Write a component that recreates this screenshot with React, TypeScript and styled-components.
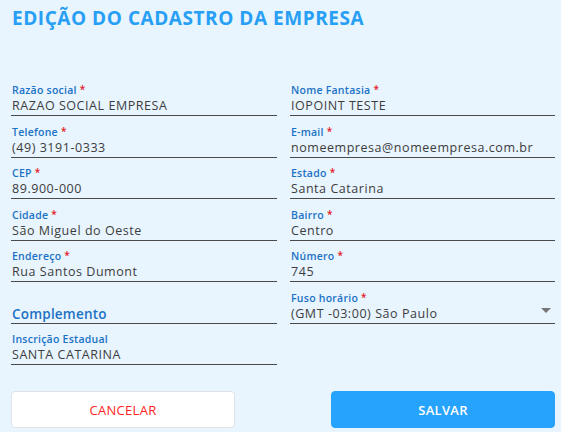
import React from "react";
import styled, { createGlobalStyle } from "styled-components";

const Global = createGlobalStyle`
  html, body { margin: 0; padding: 0; background: #e8f4fe; }
  body { font-family: "Open Sans", "Noto Sans", sans-serif; }
  * { box-sizing: border-box; }
`;

const Page = styled.div`
  width: 561px;
  height: 432px;
  padding: 5px 6px 0 11px;
  background: #e8f4fe;
  display: flex;
  flex-direction: column;
`;

const Title = styled.h1`
  margin: 0 0 0 1px;
  font-family: "Open Sans", sans-serif;
  font-weight: 700;
  font-size: 19px;
  line-height: 26px;
  color: #279ff5;
  letter-spacing: 0.55px;
`;

const Grid = styled.div`
  margin-top: 53px;
  display: grid;
  grid-template-columns: 266px 265px;
  column-gap: 13px;
  row-gap: 9.5px;
`;

const Field = styled.div`
  display: flex;
  flex-direction: column;
  border-bottom: 1px solid #4a4a4a;
  height: 32px;
  padding-left: 1px;
  position: relative;
`;

const Label = styled.div`
  font-size: 10.5px;
  line-height: 13px;
  font-weight: 600;
  color: #1b72c4;
  letter-spacing: 0.25px;
`;

const Star = styled.span`
  color: #e3141b;
  font-size: 10px;
  margin-left: 3px;
  position: relative;
  top: -1px;
`;

const Value = styled.div<{ $placeholder?: boolean }>`
  margin-top: auto;
  font-size: ${(p) => (p.$placeholder ? "13.5px" : "12.5px")};
  line-height: 18px;
  color: ${(p) => (p.$placeholder ? "#1b72c4" : "#3d3d3d")};
  font-weight: ${(p) => (p.$placeholder ? 600 : 400)};
  letter-spacing: ${(p) => (p.$placeholder ? "0.2px" : "0.55px")};
  white-space: nowrap;
`;

const Caret = styled.span`
  position: absolute;
  right: 4px;
  bottom: 10px;
  width: 0;
  height: 0;
  border-left: 5px solid transparent;
  border-right: 5px solid transparent;
  border-top: 5px solid #777;
`;

const Buttons = styled.div`
  margin-top: 26px;
  display: flex;
  justify-content: space-between;
`;

const Button = styled.button<{ $primary?: boolean }>`
  width: 224px;
  height: 37px;
  border-radius: 4px;
  font-family: "Open Sans", sans-serif;
  font-size: 13px;
  font-weight: ${(p) => (p.$primary ? 600 : 400)};
  color: ${(p) => (p.$primary ? "#ffffff" : "#ff2424")};
  background: ${(p) => (p.$primary ? "#25a3fd" : "#ffffff")};
  border: 1px solid ${(p) => (p.$primary ? "#25a3fd" : "#dfe3e8")};
  letter-spacing: 0.3px;
  cursor: pointer;
`;

type F = { label?: string; value: string; req?: boolean; select?: boolean; placeholder?: boolean };

const fields: F[] = [
  { label: "Razão social", value: "RAZAO SOCIAL EMPRESA", req: true },
  { label: "Nome Fantasia", value: "IOPOINT TESTE", req: true },
  { label: "Telefone", value: "(49) 3191-0333", req: true },
  { label: "E-mail", value: "nomeempresa@nomeempresa.com.br", req: true },
  { label: "CEP", value: "89.900-000", req: true },
  { label: "Estado", value: "Santa Catarina", req: true },
  { label: "Cidade", value: "São Miguel do Oeste", req: true },
  { label: "Bairro", value: "Centro", req: true },
  { label: "Endereço", value: "Rua Santos Dumont", req: true },
  { label: "Número", value: "745", req: true },
  { value: "Complemento", placeholder: true },
  { label: "Fuso horário", value: "(GMT -03:00) São Paulo", req: true, select: true },
  { label: "Inscrição Estadual", value: "SANTA CATARINA" },
];

export default function App() {
  return (
    <>
      <Global />
      <Page>
        <Title>EDIÇÃO DO CADASTRO DA EMPRESA</Title>
        <Grid>
          {fields.map((f, i) => (
            <Field key={i}>
              {f.label && (
                <Label>
                  {f.label}
                  {f.req && <Star>*</Star>}
                </Label>
              )}
              <Value $placeholder={f.placeholder}>{f.value}</Value>
              {f.select && <Caret />}
            </Field>
          ))}
        </Grid>
        <Buttons>
          <Button>CANCELAR</Button>
          <Button $primary>SALVAR</Button>
        </Buttons>
      </Page>
    </>
  );
}
